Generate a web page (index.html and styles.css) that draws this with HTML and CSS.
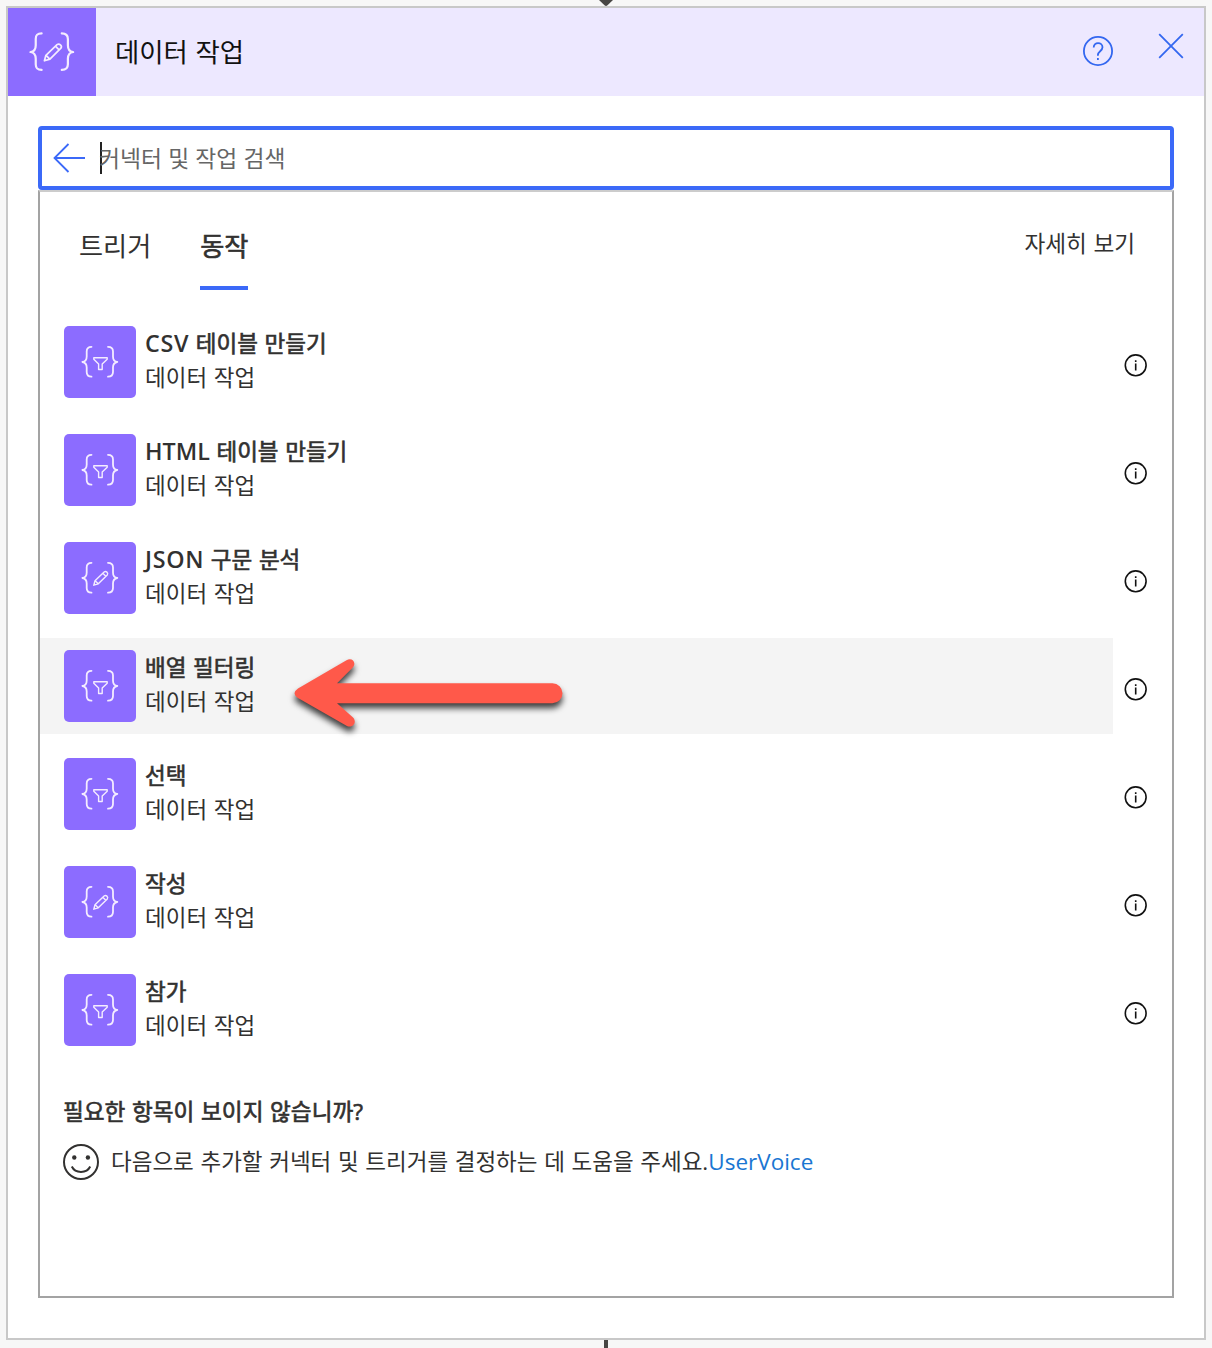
FILE: index.html
```html
<!DOCTYPE html>
<html lang="ko">
<head>
<meta charset="utf-8">
<title>데이터 작업</title>
<link rel="stylesheet" href="styles.css">
</head>
<body>
<svg class="defs" width="0" height="0" aria-hidden="true">
  <symbol id="braces" viewBox="0 0 72 72">
    <path d="M27.500 20.800c-3.800 0-4.800 1.600-4.800 4.600v5c0 3-1.200 5.200-4.300 5.600 3.100.4 4.300 2.600 4.300 5.600v4.500c0 3 1 4.600 4.800 4.600M44 20.800c3.800 0 5 1.600 5 4.600v5c0 3 1.200 5.200 4.300 5.600-3.100.4-4.300 2.600-4.300 5.600v4.500c0 3-1.200 4.600-5 4.600"/>
  </symbol>
  <symbol id="funnel" viewBox="0 0 72 72">
    <use href="#braces" width="72" height="72"/>
    <path class="thin" d="M29.800 31.700h13.400v1.500l-5 4.700v5.600h-3.600v-5.600l-4.800-4.700z"/>
  </symbol>
  <symbol id="pencil" viewBox="0 0 72 72">
    <use href="#braces" width="72" height="72"/>
    <path class="thin" d="M29.800 43.200l1.200-4.500 9.100-8.700c1.900-1.400 4.500.8 3.200 2.900l-9 8.900zM31.200 38.800l3 3M38.800 31.200l3 3"/>
  </symbol>
  <symbol id="info" viewBox="0 0 24 24">
    <circle cx="11.700" cy="12.300" r="10.400" fill="none" stroke="#111" stroke-width="1.600"/>
    <path d="M11.700 10.500v7M11.700 7.200v1.700" fill="none" stroke="#111" stroke-width="1.600"/>
  </symbol>
</svg>
<div class="connector top"><svg width="14" height="6" viewBox="0 0 14 6"><path d="M0 0h14L8.500 5.300q-1.500 1.200-3 0z" fill="#484644"/></svg></div>
<main class="card">
  <header class="card-head">
    <svg class="brand" viewBox="0 0 72 72"><use href="#pencil" width="72" height="72"/></svg>
    <h1>데이터 작업</h1>
    <svg class="help" viewBox="0 0 30 30"><circle cx="15" cy="15" r="14.100"/><path d="M10.700 11.500c0-6 8.800-5.600 8.800-.2 0 3.700-4.600 4.100-4.600 7.600v.8"/><path d="M14.900 22v2"/></svg>
    <svg class="close" viewBox="0 0 26 26"><path d="M1.200 1.200l23.600 23.600M24.800 1.200L1.200 24.800"/></svg>
  </header>
  <div class="search">
    <svg class="back" viewBox="0 0 32 30"><path d="M15.500 1L1.500 15l14 14M1.500 15H32"/></svg>
    <span class="caret"></span>
    <span class="placeholder">커넥터 및 작업 검색</span>
  </div>
  <section class="panel">
    <nav class="tabs">
      <span class="tab">트리거</span>
      <span class="tab active">동작</span>
      <span class="more">자세히 보기</span>
    </nav>
    <ul class="ops">
      <li><div class="op"><svg class="tile"><use href="#funnel"/></svg><div class="copy"><b><i>CSV</i> 테이블 만들기</b><span>데이터 작업</span></div></div><svg class="info"><use href="#info"/></svg></li>
      <li><div class="op"><svg class="tile"><use href="#funnel"/></svg><div class="copy"><b><i class="tight">HTML</i> 테이블 만들기</b><span>데이터 작업</span></div></div><svg class="info"><use href="#info"/></svg></li>
      <li><div class="op"><svg class="tile"><use href="#pencil"/></svg><div class="copy"><b><i>JSON</i> 구문 분석</b><span>데이터 작업</span></div></div><svg class="info"><use href="#info"/></svg></li>
      <li><div class="op hover"><svg class="tile"><use href="#funnel"/></svg><div class="copy"><b>배열 필터링</b><span>데이터 작업</span></div>
        <svg class="arrow" width="290" height="90" viewBox="0 0 290 90"><path d="M12.500 29L61 .8c6-3.400 10.500 3.200 6 7.500L51.500 23.700H267a10 10 0 0 1 0 20H51.500L67 57.500c5.500 5 0 12-6 8.700L12.500 38.500q-7-4.700 0-9.500z" transform="translate(-.5 10.500)"/></svg>
      </div><svg class="info"><use href="#info"/></svg></li>
      <li><div class="op"><svg class="tile"><use href="#funnel"/></svg><div class="copy"><b>선택</b><span>데이터 작업</span></div></div><svg class="info"><use href="#info"/></svg></li>
      <li><div class="op"><svg class="tile"><use href="#pencil"/></svg><div class="copy"><b>작성</b><span>데이터 작업</span></div></div><svg class="info"><use href="#info"/></svg></li>
      <li><div class="op"><svg class="tile"><use href="#funnel"/></svg><div class="copy"><b>참가</b><span>데이터 작업</span></div></div><svg class="info"><use href="#info"/></svg></li>
    </ul>
    <footer class="feedback">
      <b>필요한 항목이 보이지 않습니까?</b>
      <div class="voice">
        <svg class="smile" viewBox="0 0 36 36"><circle cx="18" cy="18" r="17"/><path d="M8.800 22.500c3.500 7.200 14.900 7.200 18.400 0"/><circle class="eye" cx="11.300" cy="13.500" r="2.200"/><circle class="eye" cx="24.900" cy="13.500" r="2.200"/></svg>
        <p>다음으로 추가할 커넥터 및 트리거를 결정하는 데 도움을 주세요.<a>UserVoice</a></p>
      </div>
    </footer>
  </section>
</main>
<div class="connector bottom"></div>
</body>
</html>
```
FILE: styles.css
```css
* { box-sizing: border-box; }
body {
  margin: 0;
  height: 1348px;
  overflow: hidden;
  background: #f7f7f7;
  color: #323130;
  font-family: "Open Sans", "Noto Sans CJK KR", sans-serif;
  font-size: 22.5px;
  line-height: 34px;
  word-spacing: .8px;
}
svg { display: block; flex: none; }
.defs { position: absolute; }
h1, p, ul { margin: 0; padding: 0; }
b, .tab.active { font-weight: 400; -webkit-text-stroke: .65px #323130; }
b i {
  font-style: normal;
  font-weight: 600;
  font-size: 23.3px;
  line-height: 1;
  letter-spacing: .7px;
  -webkit-text-stroke: 0;
}
b i.tight { letter-spacing: 0; }

.connector { display: flex; justify-content: center; }
.top { height: 6px; }
.bottom { width: 4px; height: 8px; margin-left: 604px; background: #484644; }

.card {
  width: 1200px;
  height: 1334px;
  margin-left: 6px;
  background: #fff;
  border: 2px solid #c8c8c8;
}
.card-head {
  display: flex;
  align-items: center;
  height: 88px;
  background: #ede8ff;
}
.brand { width: 88px; height: 88px; background: #8c6cff; }
.brand, .tile { fill: none; stroke: #f4ecff; stroke-width: 1.8; stroke-linejoin: round; stroke-linecap: round; }
.thin { stroke-width: 1.4; }
h1 { margin: -1px 0 0 19px; color: #111; font-size: 26.4px; font-weight: 400; }
.help, .close { fill: none; stroke: #3367f0; stroke-width: 1.8; }
.help { width: 30px; height: 30px; margin: -2px 45px 0 auto; }
.close { width: 26px; height: 26px; margin: -12px 20px 0 0; }

.search {
  display: flex;
  align-items: center;
  width: 1136px;
  height: 64px;
  margin: 30px 0 0 30px;
  padding-left: 11px;
  border: 4px solid #3b69f8;
  border-radius: 4px;
}
.back { width: 32px; height: 30px; fill: none; stroke: #3b69f8; stroke-width: 1.8; }
.caret { width: 2px; height: 32px; margin-left: 15px; background: #222; }
.placeholder { margin: 2px 0 0 -3px; color: #666; font-size: 22.8px; word-spacing: .3px; }

.panel {
  width: 1136px;
  height: 1108px;
  margin-left: 30px;
  border: 2px solid #a3a3a3;
  border-top-color: #ccc;
}
.tabs { display: flex; height: 98px; padding: 30px 37px 0 39px; }
.tab { height: 68px; margin-right: 49px; font-size: 26.2px; line-height: 48px; }
.tab.active { border-bottom: 4px solid #3b69f8; }
.more { margin-left: auto; font-size: 22.6px; line-height: 43px; }

.ops { display: grid; gap: 12px; margin-top: 24px; list-style: none; }
.ops li { display: flex; align-items: center; height: 96px; }
.op { position: relative; display: flex; width: 1073px; height: 96px; padding: 12px 24px; }
.hover { background: #f4f4f4; }
.tile { width: 72px; height: 72px; border-radius: 5px; background: #8c6cff; }
.copy { display: flex; flex-direction: column; margin: 1px 0 0 9px; }
.copy b, .copy span { height: 34px; }
.info { width: 24px; height: 24px; margin: 6px 0 0 11px; }
.arrow {
  position: absolute;
  left: 246px;
  top: 11px;
  overflow: visible;
  fill: #ff594a;
  filter: drop-shadow(0 5px 3px rgba(0, 0, 0, .75));
}

.feedback { margin: 37px 0 0 23px; }
.feedback b { display: block; font-size: 22.6px; word-spacing: .8px; }
.voice { display: flex; align-items: center; margin-top: 15px; }
.smile { width: 36px; height: 36px; fill: none; stroke: #323130; stroke-width: 2; }
.eye { fill: #323130; stroke: none; }
.voice p { margin-left: 12px; white-space: nowrap; }
.voice a { color: #1a76d2; }
```
